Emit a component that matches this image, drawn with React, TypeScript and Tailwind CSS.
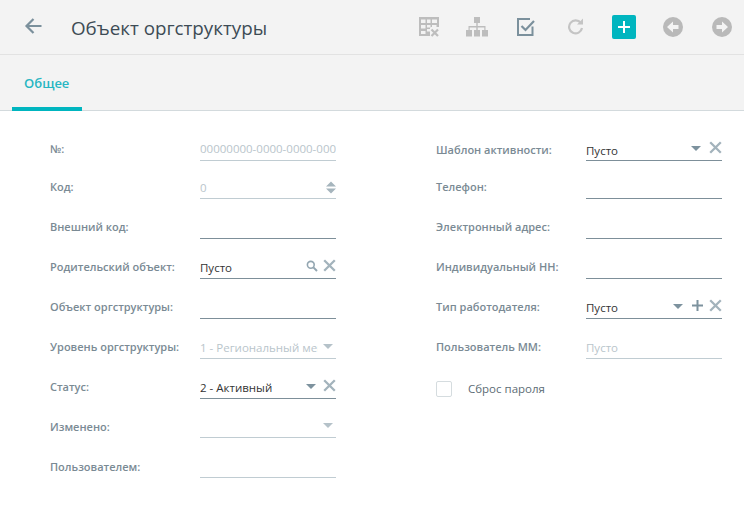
import React from "react";

const X = () => (
  <svg width="13" height="13" viewBox="0 0 13 13" className="shrink-0 -translate-y-[1px]">
    <path d="M1.2 1.2 L11.8 11.8 M11.8 1.2 L1.2 11.8" stroke="#a3b3bc" strokeWidth="2.3" fill="none" />
  </svg>
);
const Caret = ({ c = "#7d929e" }: { c?: string }) => (
  <svg width="10" height="5" viewBox="0 0 10 5" className="shrink-0">
    <path d="M0 0 H10 L5 5 Z" fill={c} />
  </svg>
);
const Search = () => (
  <svg width="12" height="12" viewBox="0 0 12 12" className="shrink-0 -translate-y-[1px]">
    <circle cx="4.8" cy="4.8" r="3.4" stroke="#93a6b1" strokeWidth="1.6" fill="none" />
    <path d="M7.4 7.4 L11 11" stroke="#93a6b1" strokeWidth="2" />
  </svg>
);
const Plus = () => (
  <svg width="11" height="11" viewBox="0 0 11 11" className="shrink-0 -translate-y-[1px]">
    <path d="M5.5 0 V11 M0 5.5 H11" stroke="#7d929e" strokeWidth="2" />
  </svg>
);
const Spin = () => (
  <svg width="10" height="13" viewBox="0 0 10 13" className="shrink-0 translate-y-[1px]">
    <path d="M5 0.5 L10 5.5 H0 Z M0 7.5 H10 L5 12.5 Z" fill="#a6b5bd" />
  </svg>
);

function Row({
  label, h, text, tone = "none", line = "dark", right, labelClass = "-translate-y-[1px]", textClass = "",
}: {
  label: string; h: string; text?: string; tone?: "none" | "dark"; line?: "dark" | "light"; right?: React.ReactNode; labelClass?: string; textClass?: string;
}) {
  return (
    <div className={`flex items-end ${h}`}>
      <div className={`w-[150px] h-[22px] text-[11px] font-semibold text-[#7a8a94] leading-[22px] whitespace-nowrap ${labelClass}`}>{label}</div>
      <div className={`w-[136px] h-[22px] flex items-center justify-between border-b ${line === "dark" ? "border-[#7d8f99]" : "border-[#c0ccd2]"}`}>
        <span className={`text-[11.5px] overflow-hidden whitespace-nowrap flex-1 min-w-0 ${tone === "dark" ? "text-[#333333]" : "text-[#b9c5cb]"} ${textClass}`}>{text}</span>
        {right && <span className="flex items-center shrink-0 -translate-y-[1px]">{right}</span>}
      </div>
    </div>
  );
}

export default function App() {
  return (
    <div className="w-[744px] h-[510px] bg-white overflow-hidden font-['Open_Sans',sans-serif]">
      <header className="h-[55px] bg-[#f3f3f3] border-b border-[#e2e2e2] flex items-center">
        <svg width="20" height="18" viewBox="0 0 20 18" className="ml-[24px] -mt-[3px]">
          <path d="M17.5 9 H3 M9.5 2 L2.5 9 L9.5 16" stroke="#7b909c" strokeWidth="2.2" fill="none" />
        </svg>
        <h1 className="ml-[27px] text-[18.8px] text-[#3d4b55] font-normal leading-[26px] whitespace-nowrap translate-y-[1px]">Объект оргструктуры</h1>
        <div className="ml-auto flex items-center h-full relative w-[340px]">
          <div className="absolute left-[15px] top-[17px]">
            <svg width="20" height="20" viewBox="0 0 20 20">
              <path fillRule="evenodd" d="M0 0 H20 V10 H17.5 V8 H13 V10 H11 V12 H8 V14.5 H11 V19 H0 Z M2 2.5 V6 H6.5 V2.5 Z M8 2.5 V6 H11.5 V2.5 Z M13 2.5 V6 H18 V2.5 Z M2 8 V11.5 H6.5 V8 Z M8 8 V10.5 H11.5 V8 Z M2 14 V17 H6.5 V14 Z" fill="#bdbdbd" />
              <path d="M12.5 12.5 L19 19 M19 12.5 L12.5 19" stroke="#bdbdbd" strokeWidth="2.2" />
            </svg>
          </div>
          <div className="absolute left-[62px] top-[17px]">
            <svg width="22" height="20" viewBox="0 0 22 20">
              <path d="M8 0 H14 V6 H11.7 V9 H19.5 V13 H18.3 V10.4 H11.7 V13 H10.3 V10.4 H3.7 V13 H2.5 V9 H10.3 V6 H8 Z M0 13 H6 V19.5 H0 Z M8 13 H14 V19.5 H8 Z M16 13 H22 V19.5 H16 Z" fill="#bdbdbd" />
            </svg>
          </div>
          <div className="absolute left-[113px] top-[18px]">
            <svg width="19" height="19" viewBox="0 0 19 19">
              <path d="M15.5 8.5 V17 H1 V1 H13" stroke="#7b909c" strokeWidth="2" fill="none" />
              <path d="M4.5 8 L8.5 12 L17 3" stroke="#7b909c" strokeWidth="2.2" fill="none" />
            </svg>
          </div>
          <div className="absolute left-[163px] top-[18px]">
            <svg width="17" height="17" viewBox="0 0 17 17">
              <path d="M13.8 5 A6.5 6.5 0 1 0 15 10" stroke="#c4c4c4" strokeWidth="2.2" fill="none" />
              <path d="M10 6.5 H16 V0.5 Z" fill="#c4c4c4" />
            </svg>
          </div>
          <div className="absolute left-[208px] top-[15px] w-[24px] h-[24px] rounded-[2px] bg-[#00b5bf] flex items-center justify-center">
            <svg width="12" height="12" viewBox="0 0 12 12">
              <path d="M6 0 V12 M0 6 H12" stroke="#fff" strokeWidth="2" />
            </svg>
          </div>
          <div className="absolute left-[259px] top-[17px]">
            <svg width="20" height="20" viewBox="0 0 20 20">
              <circle cx="10" cy="10" r="10" fill="#b9b9b9" />
              <path d="M4 10 L10 4.5 V8 H15.5 V12 H10 V15.5 Z" fill="#f3f3f3" />
            </svg>
          </div>
          <div className="absolute left-[308px] top-[17px]">
            <svg width="20" height="20" viewBox="0 0 20 20">
              <circle cx="10" cy="10" r="10" fill="#b9b9b9" />
              <path d="M16 10 L10 4.5 V8 H4.5 V12 H10 V15.5 Z" fill="#f3f3f3" />
            </svg>
          </div>
        </div>
      </header>
      <nav className="h-[56px] bg-[#f3f3f3] border-b border-[#d3dadd] pl-[12px] flex">
        <div className="w-[70px] h-[56px] border-b-[4px] border-[#00b5bf] pl-[12px] pt-[17px] text-[13px] font-semibold text-[#27b6c2] leading-[22px]">Общее</div>
      </nav>
      <main className="flex pl-[50px] pt-[11px]">
        <div className="w-[386px]">
          <Row label="№:" h="h-[39px]" text="00000000-0000-0000-000" line="light" labelClass="-translate-y-[1px]" textClass="-translate-y-[1px]" />
          <Row label="Код:" h="h-[38px]" text="0" line="light" right={<Spin />} />
          <Row label="Внешний код:" h="h-[40px]" />
          <Row label="Родительский объект:" h="h-[40px]" text="Пусто" tone="dark" right={<><Search /><span className="w-[5px]" /><X /></>} />
          <Row label="Объект оргструктуры:" h="h-[40px]" />
          <Row label="Уровень оргструктуры:" h="h-[40px]" text="1 - Региональный мег" line="light" right={<><span className="w-[5px]" /><Caret c="#b5c2c9" /><span className="w-[3px]" /></>} />
          <Row label="Статус:" h="h-[40px]" text="2 - Активный" tone="dark" right={<><Caret /><span className="w-[7px]" /><X /></>} />
          <Row label="Изменено:" h="h-[39px]" line="light" labelClass="translate-y-0" right={<><Caret c="#b5c2c9" /><span className="w-[3px]" /></>} />
          <Row label="Пользователем:" h="h-[40px]" line="light" labelClass="translate-y-0" />
        </div>
        <div className="w-[286px]">
          <Row label="Шаблон активности:" h="h-[39px]" text="Пусто" tone="dark" labelClass="translate-y-0" textClass="translate-y-[1px]" right={<><Caret /><span className="w-[8px]" /><X /></>} />
          <Row label="Телефон:" h="h-[38px]" />
          <Row label="Электронный адрес:" h="h-[40px]" />
          <Row label="Индивидуальный НН:" h="h-[40px]" />
          <Row label="Тип работодателя:" h="h-[40px]" text="Пусто" tone="dark" right={<><Caret /><span className="w-[9px]" /><Plus /><span className="w-[6px]" /><X /></>} />
          <Row label="Пользователь ММ:" h="h-[40px]" text="Пусто" line="light" />
          <div className="flex items-center h-[22px] mt-[19px]">
            <div className="w-[16px] h-[16px] rounded-[2px] border border-[#d5dcdf] bg-white" />
            <span className="ml-[16px] text-[11.5px] text-[#5d6c75]">Сброс пароля</span>
          </div>
        </div>
      </main>
    </div>
  );
}
